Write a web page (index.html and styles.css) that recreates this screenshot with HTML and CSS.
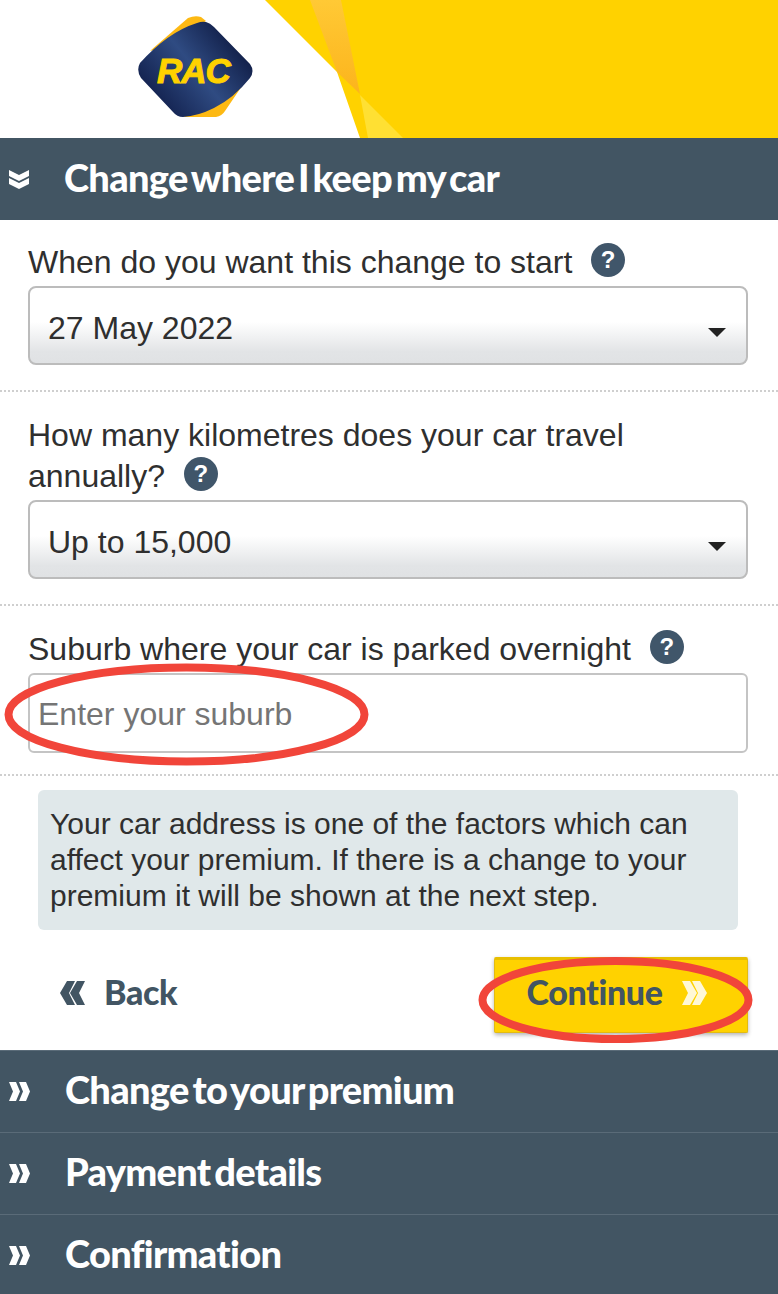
FILE: index.html
```html
<!DOCTYPE html>
<html lang="en">
<head>
<meta charset="utf-8">
<title>Change where I keep my car</title>
<link rel="stylesheet" href="styles.css">
</head>
<body>
<div class="page">
  <header class="masthead">
    <svg class="art" viewBox="0 0 778 138" preserveAspectRatio="none" aria-hidden="true">
      <defs>
        <linearGradient id="streak" x1="0" y1="0" x2="0" y2="1">
          <stop offset="0" stop-color="#ffc935"/>
          <stop offset="1" stop-color="#fcb41c"/>
        </linearGradient>
      </defs>
      <polygon points="265,0 778,0 778,138 360,138 337,72" fill="#ffd200"/>
      <polygon points="310,0 341,0 360,94 337,72" fill="url(#streak)"/>
      <polygon points="360,95 403,138 368,138" fill="#ffe033"/>
    </svg>
    <svg class="logo" viewBox="0 0 115 101" role="img" aria-label="RAC">
      <defs>
        <linearGradient id="navy" x1="0.05" y1="0.8" x2="0.95" y2="0.2">
          <stop offset="0" stop-color="#0f1c48"/>
          <stop offset="0.5" stop-color="#2f4b82"/>
          <stop offset="1" stop-color="#0c173e"/>
        </linearGradient>
      </defs>
      <path d="M12 35 L50 2 Q57 -1 63 1 L68 5 L30 30 Z" fill="#fdb913"/>
      <path d="M45 101 L78 101 Q84 100 87 95 L104 70 L80 85 Z" fill="#fdb913"/>
      <path d="M2 47 Q30 16 59 7 Q64 5 68 6 Q72 7 76 11 L112 48 Q117 55 112 62 Q96 82 76 92 Q60 100 45 101 Q39 101 35 96 L3 62 Q-2 54 2 47 Z" fill="url(#navy)"/>
      <text class="logo-text" x="19" y="67">RAC</text>
    </svg>
  </header>

  <h2 class="bar bar-open">
    <svg class="bar-icon" viewBox="0 0 20 19" aria-hidden="true"><path d="M0 0 L10 5 L20 0 V6 L10 11 L0 6 Z M0 8 L10 13 L20 8 V14 L10 19 L0 14 Z" fill="#fff"/></svg>
    <span>Change where I keep my car</span>
  </h2>

  <section class="field first">
    <label class="label">When do you want this change to start <span class="help">?</span></label>
    <div class="select">27 May 2022<span class="caret"></span></div>
  </section>

  <section class="field">
    <label class="label"><span>How many kilometres does your car travel</span> <span>annually?</span> <span class="help">?</span></label>
    <div class="select">Up to 15,000<span class="caret"></span></div>
  </section>

  <section class="field last">
    <label class="label">Suburb where your car is parked overnight <span class="help">?</span></label>
    <input class="input" type="text" placeholder="Enter your suburb">
  </section>

  <p class="note">Your car address is one of the factors which can affect your premium. If there is a change to your premium it will be shown at the next step.</p>

  <div class="actions">
    <a class="back">
      <svg class="chev" viewBox="0 0 25 24" aria-hidden="true"><path d="M7 0 H15 L9 12 L15 24 H7 L0 12 Z M17 0 H25 L19 12 L25 24 H17 L10 12 Z" fill="#425563"/></svg>
      Back
    </a>
    <button class="continue" type="button">Continue
      <svg class="chev" viewBox="0 0 25 24" aria-hidden="true"><path d="M0 0 H8 L15 12 L8 24 H0 L6 12 Z M10 0 H18 L25 12 L18 24 H10 L16 12 Z" fill="#fff8d6"/></svg>
    </button>
  </div>

  <h2 class="bar">
    <svg class="bar-icon wide" viewBox="0 0 21 19" aria-hidden="true"><path d="M0 0 H7 L11 9.5 L7 19 H0 L4 9.5 Z M10 0 H17 L21 9.5 L17 19 H10 L14 9.5 Z" fill="#fff"/></svg>
    <span>Change to your premium</span>
  </h2>
  <h2 class="bar">
    <svg class="bar-icon wide" viewBox="0 0 21 19" aria-hidden="true"><path d="M0 0 H7 L11 9.5 L7 19 H0 L4 9.5 Z M10 0 H17 L21 9.5 L17 19 H10 L14 9.5 Z" fill="#fff"/></svg>
    <span>Payment details</span>
  </h2>
  <h2 class="bar">
    <svg class="bar-icon wide" viewBox="0 0 21 19" aria-hidden="true"><path d="M0 0 H7 L11 9.5 L7 19 H0 L4 9.5 Z M10 0 H17 L21 9.5 L17 19 H10 L14 9.5 Z" fill="#fff"/></svg>
    <span>Confirmation</span>
  </h2>

  <svg class="marks" viewBox="0 0 778 1294" aria-hidden="true">
    <ellipse cx="186.5" cy="714.5" rx="178" ry="47" fill="none" stroke="#f1453a" stroke-width="8"/>
    <ellipse cx="615.5" cy="1000" rx="133" ry="39" fill="none" stroke="#f1453a" stroke-width="8"/>
  </svg>
</div>
</body>
</html>
```

FILE: styles.css
```css
* { box-sizing: border-box; }
html, body { margin: 0; padding: 0; background: #fff; }
.page {
  position: relative;
  width: 778px;
  height: 1294px;
  overflow: hidden;
  font-family: "Liberation Sans", Arial, sans-serif;
  color: #2f2f2f;
}
.masthead {
  position: relative;
  height: 138px;
  padding: 16px 0 0 138px;
}
.art { position: absolute; inset: 0; width: 100%; height: 100%; display: block; }
.logo { position: relative; display: block; width: 115px; height: 101px; }
.logo-text {
  font-family: "Liberation Sans", Arial, sans-serif;
  font-weight: 700;
  font-style: italic;
  font-size: 35px;
  letter-spacing: -1px;
  fill: #ffd200;
  stroke: #ffd200;
  stroke-width: 1px;
}
.bar {
  display: flex;
  align-items: center;
  margin: 0;
  height: 82px;
  padding: 0 0 5px 9px;
  background: #425563;
  border-top: 1px solid #5a6b78;
  color: #fff;
  font-family: Lato, "Open Sans", sans-serif;
  font-weight: 900;
  font-size: 38px;
  letter-spacing: -0.7px;
  word-spacing: -4.5px;
}
.bar-open { border-top: 0; }
.bar-open span { margin-left: 35px; }
.bar-icon { width: 20px; height: 19px; flex: none; margin-top: 5px; }
.bar-icon.wide { width: 21px; }
.bar-icon.wide + span { margin-left: 35px; }
.field {
  padding: 23px 30px 25px 28px;
  border-bottom: 2px dotted #cfcfcf;
}
.field.first { padding-top: 22px; }
.field.last { padding-bottom: 21px; }
.label {
  display: block;
  font-size: 32px;
  line-height: 41px;
  margin-bottom: 3px;
}
.help {
  display: inline-block;
  width: 34px;
  height: 34px;
  margin-left: 10px;
  border-radius: 50%;
  background: #40566a;
  color: #fff;
  font-size: 24px;
  font-weight: 700;
  line-height: 34px;
  text-align: center;
  vertical-align: 5px;
}
.select {
  position: relative;
  height: 79px;
  padding: 0 18px;
  border: 2px solid #bcbcbc;
  border-radius: 8px;
  background: linear-gradient(#fff 0%, #fff 45%, #e2e4e6 85%, #e0e2e4 100%);
  font-size: 32px;
  line-height: 80px;
}
.caret {
  position: absolute;
  right: 20px;
  top: 40px;
  width: 0;
  height: 0;
  border-left: 9px solid transparent;
  border-right: 9px solid transparent;
  border-top: 9px solid #222;
}
.input {
  display: block;
  width: 100%;
  height: 80px;
  padding: 2px 8px 0;
  border: 2px solid #c4c4c4;
  border-radius: 6px;
  background: #fff;
  font-family: inherit;
  font-size: 32px;
  color: #2f2f2f;
}
.input::placeholder { color: #757575; opacity: 1; }
.note {
  width: 700px;
  height: 140px;
  margin: 14px 0 0 38px;
  padding: 16px 12px;
  border-radius: 6px;
  background: #e0e8ea;
  font-size: 30px;
  line-height: 36px;
}
.actions {
  display: flex;
  justify-content: space-between;
  align-items: center;
  height: 120px;
  padding: 27px 30px 17px 60px;
}
.back, .continue {
  display: flex;
  align-items: center;
  color: #425563;
  font-family: Lato, "Open Sans", sans-serif;
  font-weight: 900;
  font-size: 34px;
  letter-spacing: -0.4px;
}
.back { gap: 19px; padding-bottom: 8px; }
.chev { width: 25px; height: 24px; flex: none; margin-top: 4px; }
.continue {
  justify-content: center;
  gap: 20px;
  width: 254px;
  height: 76px;
  padding: 0 8px 10px 0;
  border: 1px solid #e3bb10;
  border-top: 3px solid #e8bf00;
  border-radius: 2px;
  background: #ffd200;
  box-shadow: 0 2px 4px rgba(0,0,0,.3);
}
.marks { position: absolute; inset: 0; width: 778px; height: 1294px; pointer-events: none; }
```
